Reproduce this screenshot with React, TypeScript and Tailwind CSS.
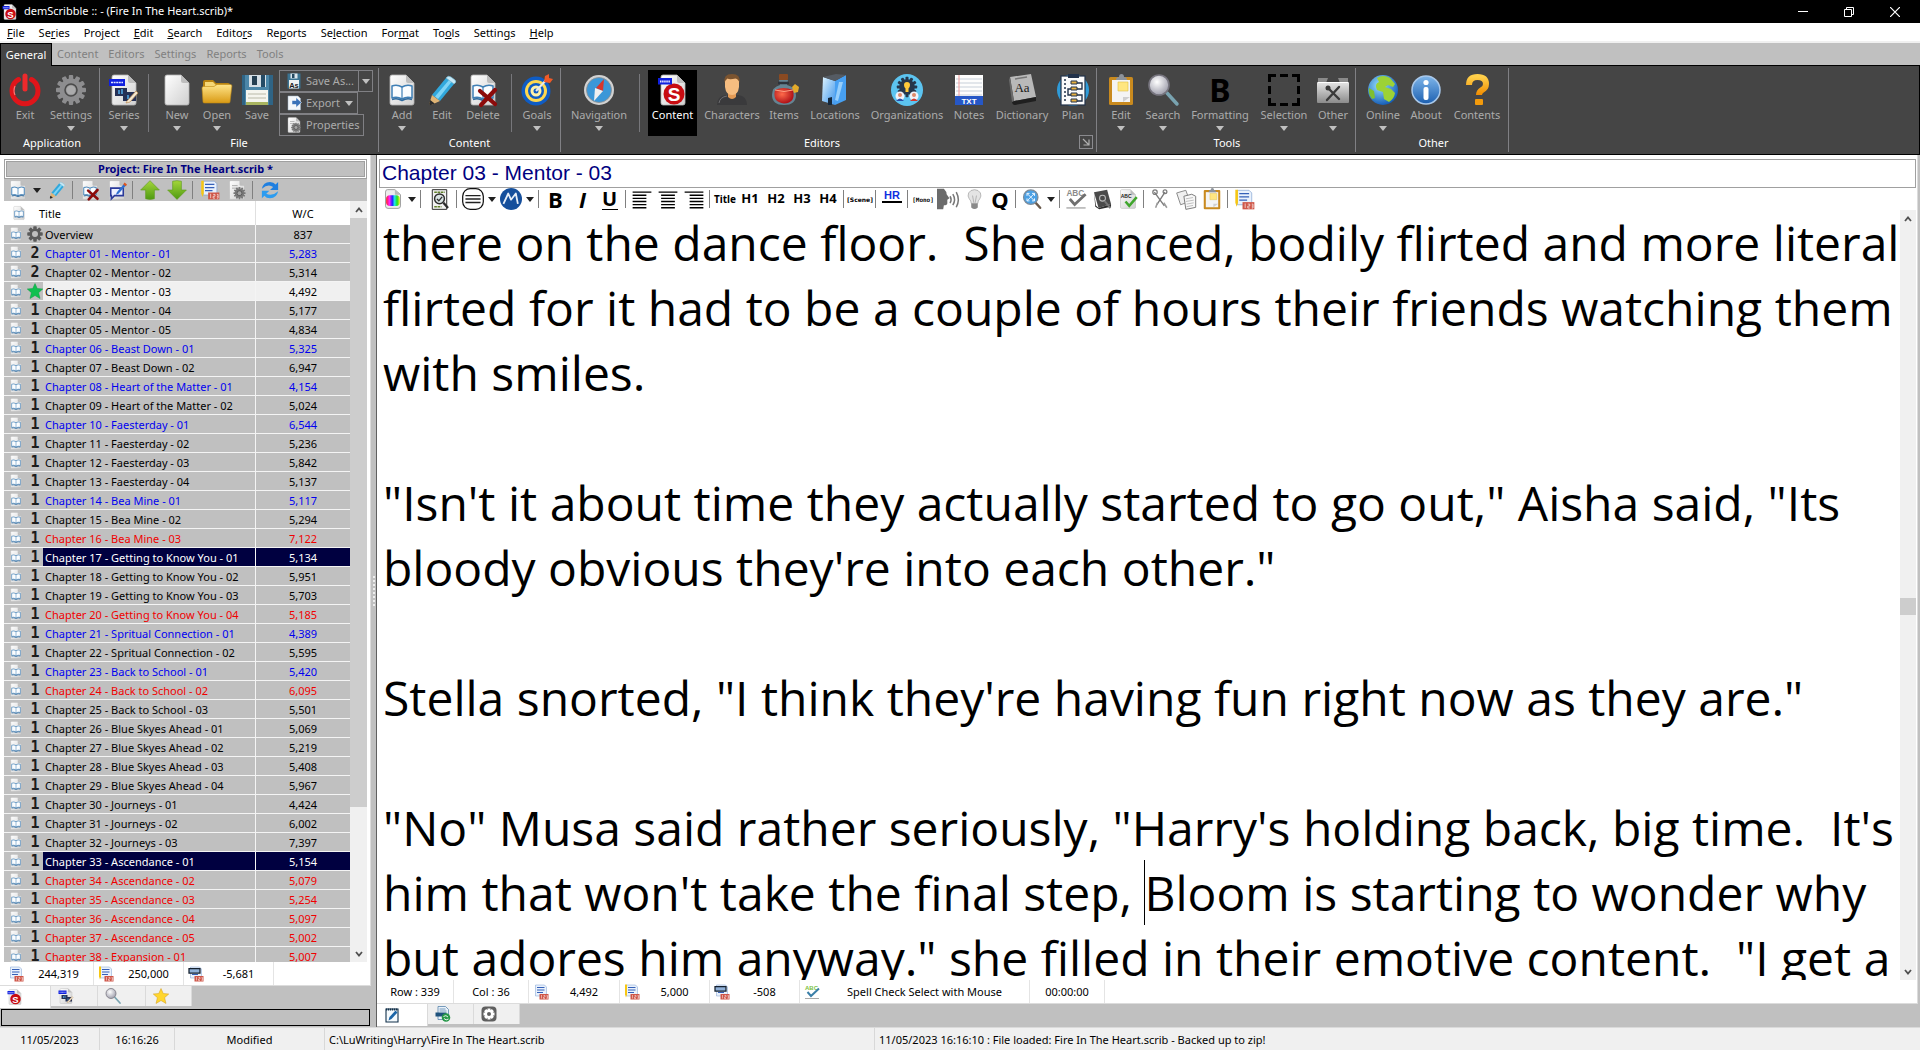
import { useState, type ReactNode } from "react";
import clsx from "clsx";

type IconProps = { className?: string };

/* ---------- shared drawing parts ---------- */

function Defs() {
  return (
    <svg className="absolute size-0" aria-hidden="true">
      <defs>
        <linearGradient id="paper" x1="0" y1="0" x2="1" y2="1">
          <stop offset="0" stopColor="#ffffff" />
          <stop offset="1" stopColor="#cfcfcf" />
        </linearGradient>
        <linearGradient id="folder" x1="0" y1="0" x2="0" y2="1">
          <stop offset="0" stopColor="#ffe58a" />
          <stop offset="1" stopColor="#d99a14" />
        </linearGradient>
        <linearGradient id="steel" x1="0" y1="0" x2="0" y2="1">
          <stop offset="0" stopColor="#e6e6e6" />
          <stop offset="1" stopColor="#8b8b8b" />
        </linearGradient>
        <linearGradient id="green" x1="0" y1="0" x2="0" y2="1">
          <stop offset="0" stopColor="#a4d63a" />
          <stop offset="1" stopColor="#4e9a12" />
        </linearGradient>
        <linearGradient id="blue" x1="0" y1="0" x2="0" y2="1">
          <stop offset="0" stopColor="#7fb6ea" />
          <stop offset="1" stopColor="#1c5fb0" />
        </linearGradient>
        <linearGradient id="amber" x1="0" y1="0" x2="0" y2="1">
          <stop offset="0" stopColor="#ffcf4a" />
          <stop offset="1" stopColor="#f08c00" />
        </linearGradient>
        <linearGradient id="glass" x1="0" y1="0" x2="1" y2="1">
          <stop offset="0" stopColor="#dff5ff" />
          <stop offset="1" stopColor="#3e94ea" />
        </linearGradient>
        <linearGradient id="spectrum" x1="0" y1="0" x2="1" y2="0">
          <stop offset="0" stopColor="#ff2020" />
          <stop offset="0.25" stopColor="#ff20ff" />
          <stop offset="0.45" stopColor="#2020ff" />
          <stop offset="0.62" stopColor="#20e8e8" />
          <stop offset="0.8" stopColor="#20e020" />
          <stop offset="1" stopColor="#f8f020" />
        </linearGradient>
        <radialGradient id="lens" cx="0.4" cy="0.35" r="0.7">
          <stop offset="0" stopColor="#ffffff" />
          <stop offset="1" stopColor="#9a9aa8" />
        </radialGradient>
        <radialGradient id="potion" cx="0.4" cy="0.4" r="0.6">
          <stop offset="0" stopColor="#ff6a4a" />
          <stop offset="1" stopColor="#b01218" />
        </radialGradient>
        <radialGradient id="globe" cx="0.4" cy="0.35" r="0.7">
          <stop offset="0" stopColor="#9be4ff" />
          <stop offset="1" stopColor="#0e56b4" />
        </radialGradient>
      </defs>
    </svg>
  );
}

function Svg({ className = "size-8", children }: IconProps & { children: ReactNode }) {
  return (
    <svg viewBox="0 0 32 32" className={clsx("shrink-0 overflow-visible", className)} aria-hidden="true">
      {children}
    </svg>
  );
}

const Paper = () => (
  <>
    <path d="M6 1h14l8 8v20q0 2-2 2H6q-2 0-2-2V3q0-2 2-2z" fill="url(#paper)" stroke="#b5b5b5" strokeWidth="0.8" />
    <path d="M20 1v6q0 2 2 2h6z" fill="#bdbdbd" />
  </>
);

const Book = () => (
  <>
    <path d="M6 12q5-2 10 1q5-3 10-1v12q-5-2-10 1q-5-3-10-1z" fill="#fbfdff" stroke="#3f7fb5" strokeWidth="1.500" strokeLinejoin="round" />
    <path d="M16 13v12" stroke="#3f7fb5" strokeWidth="1.200" />
    <path d="M6 25.500q5-2 10 1q5-3 10-1" fill="none" stroke="#2f6a9e" strokeWidth="1.500" />
  </>
);

const Cog = ({ fill, cx = 16, cy = 16, s = 1 }: { fill: string; cx?: number; cy?: number; s?: number }) => (
  <g transform={`translate(${cx} ${cy}) scale(${s})`}>
    {[0, 30, 60, 90, 120, 150].map((a) => (
      <rect key={a} x="-2.2" y="-15" width="4.4" height="30" rx="1" fill={fill} transform={`rotate(${a})`} />
    ))}
    <circle r="11.5" fill={fill} />
    <circle r="6" fill="none" stroke="#4a4a4a" strokeWidth="1.5" />
    <circle r="4.6" fill="#b8b8b8" opacity="0.7" />
  </g>
);

const Cross = () => <path d="M13 17l15 13M28 16L14 31" stroke="#8c0b0b" strokeWidth="4.2" strokeLinecap="round" />;

/* ---------- icons ---------- */

const PowerIcon = (p: IconProps) => (
  <Svg {...p}>
    <path d="M9.5 5.500A13 13 0 1 0 22.500 5.500" fill="none" stroke="#e0151a" strokeWidth="5" strokeLinecap="round" />
    <path d="M16 2v13" stroke="#ee2a2c" strokeWidth="5" strokeLinecap="round" />
    <path d="M6 12a11 11 0 0 0 0 9" fill="none" stroke="#ff7b78" strokeWidth="1.2" />
  </Svg>
);

const GearIcon = (p: IconProps) => (
  <Svg {...p}>
    <Cog fill="#8d8d8f" />
  </Svg>
);

const SmallGearIcon = (p: IconProps) => (
  <Svg {...p}>
    {[0, 45, 90, 135].map((a) => (
      <rect key={a} x="12.500" y="0.5" width="7" height="31" rx="1.500" fill="#5b5b5b" transform={`rotate(${a} 16 16)`} />
    ))}
    <circle cx="16" cy="16" r="8.500" fill="#c0c0c0" stroke="#5b5b5b" strokeWidth="5" />
  </Svg>
);

const SeriesIcon = (p: IconProps) => (
  <Svg {...p}>
    <Paper />
    <rect x="1" y="5" width="16" height="7" fill="#1020e0" />
    <path d="M3 8.500h12" stroke="#dfe4ff" strokeWidth="1.500" strokeDasharray="2 .6" />
    <path d="M7 14h12v8H7zM17 18h11v9H15v-5z" fill="#253055" />
    <path d="M11 16v4M14 15v5M20 21v4" stroke="#4fa3e0" strokeWidth="1.600" />
    <path d="M19 27l9-10 2 2-8 9-4 1z" fill="#f5e8d0" stroke="#b98a50" strokeWidth="0.7" />
  </Svg>
);

const NewIcon = (p: IconProps) => (
  <Svg {...p}>
    <Paper />
  </Svg>
);

const FolderIcon = (p: IconProps) => (
  <Svg {...p}>
    <path d="M2 8q0-2 2-2h8l3 3h12q2 0 2 2v16H2z" fill="#b98310" />
    <path d="M4 8h8l3 3h12v5H4z" fill="#f6d776" />
    <path d="M1 14q0-1.500 1.500-1.500H13l3-2h13.500q1.500 0 1.400 1.500L29 28q0 1-1.500 1h-24Q2 29 2 28z" fill="url(#folder)" stroke="#c08a14" strokeWidth="0.6" />
  </Svg>
);

const DiskIcon = (p: IconProps) => (
  <Svg {...p}>
    <path d="M1 1h29l2 2v28H1z" fill="#4b86a8" />
    <path d="M1 1h3v30H1zM28 1h4v30h-4z" fill="#2f6485" />
    <rect x="8" y="1" width="17" height="12" fill="#d5dfe6" />
    <rect x="11" y="2" width="5" height="9" fill="#243f52" />
    <rect x="20" y="1" width="4" height="12" fill="#254b66" />
    <rect x="5" y="16" width="22" height="15" fill="#f5f5ee" />
    <path d="M7 20h18M7 24h18" stroke="#b9b9a8" />
    <rect x="5" y="28" width="22" height="3" fill="#a9b560" />
  </Svg>
);

const SaveAsIcon = (p: IconProps) => (
  <Svg {...p}>
    <path d="M3 1h26v30H3z" fill="#3b7391" />
    <rect x="9" y="1" width="14" height="10" fill="#dbe5ec" />
    <rect x="12" y="2" width="5" height="8" fill="#23485f" />
    <rect x="6" y="14" width="20" height="17" fill="#eef2f2" />
    <text x="16" y="29" textAnchor="middle" fontSize="15" fontWeight="700" fontFamily="Liberation Sans" fill="#1a1a1a">As</text>
  </Svg>
);

const ExportIcon = (p: IconProps) => (
  <Svg {...p}>
    <path d="M4 2h20l5 5v23H4z" fill="#f4f7fa" stroke="#9fb3c6" />
    <path d="M12 11h8V5l11 10-11 10v-6h-8z" fill="#3a72b8" stroke="#fff" />
  </Svg>
);

const DocGearIcon = (p: IconProps) => (
  <Svg {...p}>
    <Paper />
    <path d="M8 9h9M8 13h12" stroke="#a9a9a9" strokeWidth="1.500" />
    <Cog fill="#777" cx={20} cy={21} s={0.65} />
  </Svg>
);

const BookIcon = (p: IconProps) => (
  <Svg {...p}>
    <Paper />
    <Book />
  </Svg>
);

const PencilIcon = (p: IconProps) => (
  <Svg {...p}>
    <path d="M6 21L20 4l8 6-14 17z" fill="#31a8dc" />
    <path d="M9 22.500L23 6l2.500 2L12 25z" fill="#7fd4f5" />
    <path d="M20 4q2-3 5-1l4 3q2 2-1 4z" fill="#c8e9f6" stroke="#6fb9d6" strokeWidth="0.6" />
    <path d="M6 21l8 6-9 4q-2 0-1.500-2z" fill="#e0b475" />
    <path d="M4.200 26l-1 4q.5 1.500 2 1l3.500-1.600z" fill="#2b2b2b" />
  </Svg>
);

const DeleteDocIcon = (p: IconProps) => (
  <Svg {...p}>
    <Paper />
    <Book />
    <Cross />
  </Svg>
);

const RenameDocIcon = (p: IconProps) => (
  <Svg {...p}>
    <Paper />
    <path d="M6 13h20v12H12l-5 5v-5H6z" fill="#eef1ff" stroke="#2a3a9a" strokeWidth="2.500" />
    <path d="M14 24l2-5L28 5l3 3-12 13z" fill="#2f6fd0" />
    <path d="M26 7l2-3 4 3-2 3z" fill="#e0561c" />
  </Svg>
);

const TargetIcon = (p: IconProps) => (
  <Svg {...p}>
    <circle cx="15" cy="17" r="14.500" fill="#0f5cc4" />
    <circle cx="15" cy="17" r="11" fill="#ffd84e" />
    <circle cx="15" cy="17" r="8" fill="#0f5cc4" />
    <circle cx="15" cy="17" r="5.500" fill="#fff1a8" />
    <circle cx="15" cy="17" r="2.500" fill="#0f5cc4" />
    <path d="M15 17L27 4" stroke="#e9e9e9" strokeWidth="2" />
    <path d="M23 8l1-6 4-2v4l4 1-3 4z" fill="#ef5a28" />
  </Svg>
);

const CompassIcon = (p: IconProps) => (
  <Svg {...p}>
    <circle cx="16" cy="16" r="15" fill="#d2d2d2" />
    <circle cx="16" cy="16" r="12.500" fill="#3b97d8" stroke="#8e8e8e" strokeWidth="0.800" />
    <path d="M21 5l-1 12-7-3z" fill="#d8362c" />
    <path d="M11 27l1-13 8 3z" fill="#f0f0f0" />
  </Svg>
);

const ScribIcon = (p: IconProps) => (
  <Svg {...p}>
    <Paper />
    <circle cx="17" cy="20" r="10.500" fill="#c80c12" />
    <text x="17" y="27" textAnchor="middle" fontSize="19" fontWeight="700" fontFamily="Liberation Sans" fill="#fff">S</text>
    <rect x="1" y="4" width="14" height="6.500" fill="#1020e0" />
    <path d="M3 7.500h10" stroke="#e6e8ff" strokeWidth="2" strokeDasharray="1.500 .6" />
  </Svg>
);

const PersonIcon = (p: IconProps) => (
  <Svg {...p}>
    <path d="M1 31q0-9 9-10h12q9 1 9 10z" fill="#3a3a3c" />
    <path d="M3 29q1-6 8-7" stroke="#6d6d70" fill="none" />
    <path d="M12 17h8v6q-4 4-8 0z" fill="#e39a55" />
    <path d="M9 7q0-6 7-6t7 6v6q-1 8-7 8t-7-8z" fill="#f6bd80" />
    <path d="M8.500 9Q7 0 16 0t7.500 9q-1-4-4-4.500-6 1.500-8 0Q9 6 8.500 9z" fill="#7b5430" />
  </Svg>
);

const PotionIcon = (p: IconProps) => (
  <Svg {...p}>
    <rect x="11" y="0" width="9" height="6" rx="1" fill="#8a4a22" />
    <path d="M11 6h9l-1 5q9 2 9 10 0 10-12 10T4 21q0-8 8-10z" fill="#6f9aae" opacity="0.75" />
    <path d="M7 16q8-4 18 0 3 13-9 13.500Q4 28 7 16z" fill="url(#potion)" />
    <path d="M7 16q9 3 18 0" stroke="#ffa083" fill="none" />
    <path d="M10 9h11" stroke="#2c333c" strokeWidth="2.500" />
    <path d="M24 13l3-3 4 3-1 5-4 1z" fill="#e3aa2a" />
  </Svg>
);

const BuildingIcon = (p: IconProps) => (
  <Svg {...p}>
    <path d="M4 3l12 4v24L3 27z" fill="url(#glass)" />
    <path d="M16 7L27 1v25l-11 5z" fill="#47a0f2" />
    <path d="M4 3L17 0l10 1-11 6z" fill="#555b63" />
    <path d="M20 8l-4 18 3 1 5-19z" fill="#b9e3ff" opacity="0.700" />
    <path d="M9 31v-7l4-1v8z" fill="#15283c" />
  </Svg>
);

const OrgIcon = (p: IconProps) => (
  <Svg {...p}>
    <circle cx="16" cy="16" r="16" fill="#5cc4f0" />
    <Cog fill="#26374c" cx={16} cy={13} s={0.68} />
    <circle cx="16" cy="13" r="6" fill="#26374c" />
    <path d="M13 11a3 3 0 0 1 6 0q0 2-1.500 3.500V18h-3v-3.500Q13 13 13 11z" fill="#ffc93a" />
    <circle cx="9" cy="22" r="4.500" fill="#eef2fa" />
    <circle cx="23" cy="22" r="4.500" fill="#eef2fa" />
    <circle cx="9" cy="21" r="2" fill="#e08a6a" />
    <circle cx="23" cy="21" r="2" fill="#e08a6a" />
    <path d="M5 27q4-5 8 0z" fill="#2c4fa8" />
    <path d="M19 27q4-5 8 0z" fill="#d2392f" />
  </Svg>
);

const NotesIcon = (p: IconProps) => (
  <Svg {...p}>
    <rect x="2" y="1" width="28" height="22" fill="#fdfdfd" />
    <path d="M3 5h26M3 9h26M3 13h26M3 17h26M3 21h26" stroke="#b9c3cf" strokeWidth="0.800" />
    <path d="M6 1v22" stroke="#f09a9a" />
    <rect x="2" y="22" width="28" height="9" fill="#2657c6" />
    <text x="16" y="29.500" textAnchor="middle" fontSize="8" fontWeight="700" fontFamily="Liberation Sans" fill="#fff">TXT</text>
  </Svg>
);

const DictionaryIcon = (p: IconProps) => (
  <Svg {...p}>
    <path d="M4 3L25 0l5 23-22 4z" fill="#b9b9b9" />
    <path d="M8 27l22-4v4L9 31q-3 0-3-4z" fill="#1f1f1f" />
    <path d="M4 3l4 24-2 1L3 6z" fill="#6b6b6b" />
    <text x="16" y="18" textAnchor="middle" fontSize="13" fontFamily="Liberation Serif" fill="#1a1a1a">Aa</text>
    <path d="M9 5l12-2" stroke="#777" strokeWidth="1.500" />
  </Svg>
);

const PlanIcon = (p: IconProps) => (
  <Svg {...p}>
    <circle cx="16" cy="16" r="16" fill="#2f9bd8" />
    <rect x="4" y="2" width="24" height="29" fill="#fbfbfb" stroke="#22324a" strokeWidth="1.200" />
    <rect x="11" y="0" width="11" height="4" fill="#22324a" />
    <path d="M8 5v24" stroke="#22324a" strokeWidth="1.500" strokeDasharray="2 2" />
    <path d="M20 9h5v6h-5M14 15h-3v6h3M20 21h5v6h-5" stroke="#22324a" fill="none" strokeWidth="1.400" />
    <path d="M14 7h6v3h-6zM14 13h6v3h-6zM14 19h6v3h-6zM14 25h6v3h-6z" fill="#e7b040" stroke="#22324a" />
  </Svg>
);

const ClipboardIcon = (p: IconProps) => (
  <Svg {...p}>
    <rect x="4" y="3" width="24" height="28" rx="1.500" fill="#c98a1e" />
    <path d="M7 6h18v22H7z" fill="#f4f4f4" />
    <path d="M11 6q0-3 3-3 0-3 2.500-3T19 3q3 0 3 3z" fill="#8d939b" />
    <path d="M13 8h10v9H13z" fill="#ffe680" stroke="#dfbf45" strokeWidth="0.600" />
    <path d="M18 28v-5h7z" fill="#cfcfcf" />
  </Svg>
);

const SearchIcon = (p: IconProps) => (
  <Svg {...p}>
    <path d="M20 19l10 11" stroke="#79a3b0" strokeWidth="3.500" strokeLinecap="round" />
    <circle cx="12" cy="11" r="10" fill="url(#lens)" stroke="#77757f" strokeWidth="1.600" />
  </Svg>
);

const BoldIcon = ({ className }: IconProps) => (
  <Svg className={className}>
    <text x="16" y="28" textAnchor="middle" fontSize="32" fontWeight="700" fontFamily="Noto Sans" fill="#000">B</text>
  </Svg>
);

const SelectionIcon = (p: IconProps) => (
  <Svg {...p}>
    <path d="M1.500 8V1.500H8M12 1.500h8M24 1.500h6.500V8M30.500 12v8M30.500 24v6.500H24M20 30.500h-8M8 30.500H1.500V24M1.500 20v-8" fill="none" stroke="#000" strokeWidth="3" />
  </Svg>
);

const ToolboxIcon = (p: IconProps) => (
  <Svg {...p}>
    <path d="M1 4h30v5H1z" fill="#8a8a8a" />
    <path d="M11 4h10l2 5H9z" fill="#454545" />
    <rect x="0" y="8" width="32" height="21" rx="1" fill="url(#steel)" />
    <path d="M11 14l11 11M22 13L10 26" stroke="#3a3a3a" strokeWidth="2.400" strokeLinecap="round" />
    <circle cx="11" cy="14" r="2.500" fill="#3a3a3a" />
    <path d="M1 8.500h30" stroke="#fff" />
  </Svg>
);

const GlobeIcon = (p: IconProps) => (
  <Svg {...p}>
    <circle cx="16" cy="16" r="15" fill="url(#globe)" />
    <path d="M10 4q6-4 13 0l5 6-2 3-5-2-3 2 6 2 4 4q-1 6-6 9l-5-3-1-7-6-2q-3-6 2-8z" fill="#9cd236" />
    <path d="M2 14l5 3 1 7-3 1q-4-5-3-11z" fill="#7fbf30" />
  </Svg>
);

const InfoIcon = (p: IconProps) => (
  <Svg {...p}>
    <circle cx="16" cy="16" r="14" fill="url(#blue)" stroke="#a9c8ea" strokeWidth="1.500" />
    <circle cx="16" cy="8.500" r="2.600" fill="#fff" />
    <rect x="13.500" y="13" width="5" height="13" rx="2" fill="#fff" />
  </Svg>
);

const QuestionIcon = (p: IconProps) => (
  <Svg {...p}>
    <path d="M8 11q0-8 8.500-8T25 10q0 4-4 6-3 2-3 5" fill="none" stroke="url(#amber)" strokeWidth="6" />
    <rect x="14" y="25" width="8" height="6" rx="1" fill="#f29a0c" />
  </Svg>
);

const UpIcon = (p: IconProps) => (
  <Svg {...p}>
    <path d="M16 1l15 15h-8v14q-7 2-14 0V16H1z" fill="url(#green)" stroke="#5d9a1a" />
  </Svg>
);

const DownIcon = (p: IconProps) => (
  <Svg {...p}>
    <path d="M16 31l15-15h-8V2Q16 0 9 2v14H1z" fill="url(#green)" stroke="#5d9a1a" />
  </Svg>
);

const RefreshIcon = (p: IconProps) => (
  <Svg {...p}>
    <path d="M3 14Q5 3 16 3q6 0 9 4l4-4v13H16l5-5q-8-6-18 3z" fill="#1f7fe0" />
    <path d="M29 18q-2 11-13 11-6 0-9-4l-4 4V17h12l-5 5q9 5 19-4z" fill="#2c9cf0" />
  </Svg>
);

// paper with the red counter box, used for everything about word counts
const CountIcon = ({ className, kind = "plain" }: IconProps & { kind?: "plain" | "goal" | "left" }) => (
  <Svg className={className}>
    <path d="M5 2h18l4 4v18H5z" fill="#e9f1fc" stroke="#7b9fd0" />
    <path d="M8 7h15M8 12h15M8 17h12" stroke="#3560b8" strokeWidth="2" />
    {kind === "goal" && <path d="M2 1h4v20l-2 6-2-6z" fill="#f7c713" />}
    {kind === "left" && <path d="M2 5h22v9H2z" fill="#8fb0d8" stroke="#15202e" strokeWidth="2.500" />}
    <rect x="13" y="20" width="18" height="11" fill="#cf5648" />
    <path d="M17 22v7M21 23h3v3h-3v3h3M27 23h2v6h-2M27 26h2" stroke="#fff" fill="none" />
  </Svg>
);

const ColorIcon = (p: IconProps) => (
  <Svg {...p}>
    <path d="M7 1h12l9 8v18q0 4-4 4H8q-4 0-4-4V5q0-4 3-4z" fill="#ececec" stroke="#9c9c9c" strokeWidth="1.500" />
    <path d="M19 1v8h9z" fill="#b9b9b9" />
    <rect x="5" y="10" width="22" height="17" rx="6" fill="url(#spectrum)" />
  </Svg>
);

const InspectIcon = (p: IconProps) => (
  <Svg {...p}>
    <path d="M5 1h22v30H5z" fill="#f2f2f2" stroke="#2c2c2c" strokeWidth="1.500" />
    <path d="M8 5h16M8 27h11" stroke="#5f7f28" strokeWidth="2.500" strokeDasharray="4 1" />
    <circle cx="16" cy="15" r="7.500" fill="#d9e3e3" stroke="#2c2c2c" strokeWidth="2.200" />
    <path d="M12 15l3 3 5-6" stroke="#2c2c2c" fill="none" strokeWidth="2" />
    <path d="M22 21l7 8" stroke="#2c2c2c" strokeWidth="3.500" />
  </Svg>
);

const LinesIcon = (p: IconProps) => (
  <Svg {...p}>
    <rect x="1" y="1" width="30" height="30" rx="11" fill="none" stroke="#111" strokeWidth="1.800" />
    <path d="M5 11h22M5 16h22M5 21h22" stroke="#222" strokeWidth="2" />
  </Svg>
);

const MarkIcon = (p: IconProps) => (
  <Svg {...p}>
    <circle cx="16" cy="16" r="16" fill="#154f9c" />
    <path d="M5 23L12 8l4 9 7-9 3 15" fill="none" stroke="#e6eef8" strokeWidth="2.600" strokeLinejoin="round" />
  </Svg>
);

const AlignLeftIcon = (p: IconProps) => (
  <Svg {...p}>
    <path d="M1 5h30M1 10h22M1 15h22M1 20h22M1 25h22M1 30h22" stroke="#000" strokeWidth="2.200" />
  </Svg>
);

const AlignCenterIcon = (p: IconProps) => (
  <Svg {...p}>
    <path d="M1 5h30M5 10h22M5 15h22M5 20h22M5 25h22M5 30h22" stroke="#000" strokeWidth="2.200" />
  </Svg>
);

const AlignRightIcon = (p: IconProps) => (
  <Svg {...p}>
    <path d="M1 5h30M9 10h22M9 15h22M9 20h22M9 25h22M9 30h22" stroke="#000" strokeWidth="2.200" />
  </Svg>
);

const SpeakIcon = (p: IconProps) => (
  <Svg {...p}>
    <path d="M0 1h10q4 4 4 8l4 6-3 2v5q0 3-5 3l-1 6H0z" fill="#6b6b6b" />
    <path d="M19 12q3 5 0 10M23 9q5 8 0 16M28 6q6 11 0 22" stroke="#777" fill="none" strokeWidth="2.200" />
  </Svg>
);

const BulbIcon = (p: IconProps) => (
  <Svg {...p}>
    <path d="M11 22q0-4-3-7Q5 11 7 6q3-5 9-5t9 5q2 5-1 9-3 3-3 7z" fill="#e4e4e4" stroke="#9a9a9a" />
    <path d="M13 10l2 11M19 10l-2 11" stroke="#9a9a9a" fill="none" />
    <path d="M11 22h10v6q-5 5-10 0z" fill="#8a8a8a" />
  </Svg>
);

const ZoomFitIcon = (p: IconProps) => (
  <Svg {...p}>
    <path d="M20 20l9 10" stroke="#6a5a4c" strokeWidth="4" strokeLinecap="round" />
    <circle cx="14" cy="13" r="11.500" fill="#4aa0e4" stroke="#7c8a98" strokeWidth="2" />
    <path d="M8 7l12 12M20 7L8 19M8 11V7h4M16 7h4v4M20 15v4h-4M12 19H8v-4" stroke="#e8f4ff" fill="none" strokeWidth="1.600" />
  </Svg>
);

const SpellIcon = ({ className, tone = "#8b8b8b", mark = "#6f6f6f" }: IconProps & { tone?: string; mark?: string }) => (
  <Svg className={className}>
    <text x="15" y="11" textAnchor="middle" fontSize="12" fontWeight="700" fontFamily="Liberation Sans" fill={tone}>ABC</text>
    <path d="M7 16l7 8L30 9" stroke={mark} strokeWidth="4" fill="none" />
    <path d="M2 29h28" stroke="#a9a9a9" strokeWidth="2" />
  </Svg>
);

const ThesaurusIcon = (p: IconProps) => (
  <Svg {...p}>
    <path d="M3 5l20-4 6 22-19 6z" fill="#4a4a4a" />
    <path d="M3 5l3 20 4 4 19-6v4L11 31l-6-4z" fill="#2c2c2c" />
    <circle cx="16" cy="14" r="4.500" fill="none" stroke="#bdbdbd" strokeWidth="1.600" />
    <path d="M19 18l9 11" stroke="#777" strokeWidth="3" />
  </Svg>
);

const ProofIcon = (p: IconProps) => (
  <Svg {...p}>
    <Paper />
    <text x="13" y="14" textAnchor="middle" fontSize="8" fontWeight="700" fontFamily="Liberation Sans" fill="#222">ABC</text>
    <path d="M12 20l6 7L30 13" stroke="#3fa62c" strokeWidth="4" fill="none" />
  </Svg>
);

const CutIcon = (p: IconProps) => (
  <Svg {...p}>
    <path d="M7 5l16 22M24 5L11 25" stroke="#7c7c7c" strokeWidth="2.200" />
    <circle cx="8" cy="5" r="3.500" fill="none" stroke="#7c7c7c" strokeWidth="2" />
    <circle cx="24" cy="4.500" r="3" fill="none" stroke="#7c7c7c" strokeWidth="2" />
    <path d="M22 22l5 8M12 22l-3 8" stroke="#9c9c9c" strokeWidth="2.500" />
  </Svg>
);

const CopyIcon = (p: IconProps) => (
  <Svg {...p}>
    <path d="M1 6l14-4 6 17-14 5z" fill="#f0f0f0" stroke="#8b8b8b" strokeWidth="1.500" />
    <path d="M12 11l12-3 6 3v17l-15 3z" fill="#f8f8f8" stroke="#7d7d7d" strokeWidth="1.500" />
    <path d="M15 15l11-2M15 19l12-2M16 23l11-2M16 27l10-2" stroke="#a2a2a2" />
  </Svg>
);

const StarIcon = ({ className, fill = "url(#amber)", stroke = "#d39a1a" }: IconProps & { fill?: string; stroke?: string }) => (
  <Svg className={className}>
    <path d="M16 1l4.500 10 11 1-8.300 7.300L26 31l-10-6-10 6 2.800-11.700L.5 12l11-1z" fill={fill} stroke={stroke} />
  </Svg>
);

const EditPageIcon = (p: IconProps) => (
  <Svg {...p}>
    <path d="M4 4h24v26H4z" fill="#f5fafd" stroke="#12304a" strokeWidth="2.200" />
    <path d="M4 5h24" stroke="#12304a" strokeWidth="4" strokeDasharray="2.500 1.500" />
    <path d="M9 27l2-7L23 7l4 4-12 13z" fill="#1c66a8" />
  </Svg>
);

const WebPageIcon = (p: IconProps) => (
  <Svg {...p}>
    <path d="M6 1h15l6 6v20H6z" fill="#eaf2fa" stroke="#4f7ea8" strokeWidth="1.500" />
    <path d="M9 6h12M9 10h14" stroke="#4f7ea8" strokeWidth="1.500" />
    <rect x="1" y="13" width="22" height="8" fill="#1e527d" />
    <circle cx="22" cy="23" r="8.500" fill="#28984a" />
    <path d="M17 21q5-4 9 1M27 26q-5 4-9-1" stroke="#fff" fill="none" strokeWidth="1.800" />
  </Svg>
);

const AppSettingsIcon = (p: IconProps) => (
  <Svg {...p}>
    <rect x="1" y="1" width="30" height="30" rx="8" fill="#5f5f5f" />
    {[0, 45, 90, 135].map((a) => (
      <rect key={a} x="13" y="5" width="6" height="22" fill="#fff" transform={`rotate(${a} 16 16)`} />
    ))}
    <circle cx="16" cy="16" r="6" fill="#5f5f5f" stroke="#fff" strokeWidth="4" />
  </Svg>
);

function Caret({ className = "text-black" }: IconProps) {
  return (
    <svg viewBox="0 0 8 5" className={clsx("h-[5px] w-2", className)} aria-hidden="true">
      <path d="M0 0h8L4 5z" fill="currentColor" />
    </svg>
  );
}

function Chevron({ down = false }: { down?: boolean }) {
  return (
    <svg viewBox="0 0 8 6" className="h-[6px] w-2" aria-hidden="true">
      <path d={down ? "M1 1l3 3.500L7 1" : "M1 5l3-3.500L7 5"} fill="none" stroke="#505050" strokeWidth="1.800" />
    </svg>
  );
}

/* ---------- data ---------- */

// label split around its mnemonic letter
const menus = [
  ["", "F", "ile"],
  ["Se", "r", "ies"],
  ["Pro", "j", "ect"],
  ["", "E", "dit"],
  ["", "S", "earch"],
  ["Edito", "r", "s"],
  ["Re", "p", "orts"],
  ["Se", "l", "ection"],
  ["For", "m", "at"],
  ["To", "o", "ls"],
  ["Settin", "g", "s"],
  ["", "H", "elp"],
];

const ribbonTabs = ["Content", "Editors", "Settings", "Reports", "Tools"];

const chapters: [string, string, string?][] = [
  ["Overview", "837"],
  ["Chapter 01 - Mentor - 01", "5,283", "blue"],
  ["Chapter 02 - Mentor - 02", "5,314"],
  ["Chapter 03 - Mentor - 03", "4,492", "current"],
  ["Chapter 04 - Mentor - 04", "5,177"],
  ["Chapter 05 - Mentor - 05", "4,834"],
  ["Chapter 06 - Beast Down - 01", "5,325", "blue"],
  ["Chapter 07 - Beast Down - 02", "6,947"],
  ["Chapter 08 - Heart of the Matter - 01", "4,154", "blue"],
  ["Chapter 09 - Heart of the Matter - 02", "5,024"],
  ["Chapter 10 - Faesterday - 01", "6,544", "blue"],
  ["Chapter 11 - Faesterday - 02", "5,236"],
  ["Chapter 12 - Faesterday - 03", "5,842"],
  ["Chapter 13 - Faesterday - 04", "5,137"],
  ["Chapter 14 - Bea Mine - 01", "5,117", "blue"],
  ["Chapter 15 - Bea Mine - 02", "5,294"],
  ["Chapter 16 - Bea Mine - 03", "7,122", "red"],
  ["Chapter 17 - Getting to Know You - 01", "5,134", "navy"],
  ["Chapter 18 - Getting to Know You - 02", "5,951"],
  ["Chapter 19 - Getting to Know You - 03", "5,703"],
  ["Chapter 20 - Getting to Know You - 04", "5,185", "red"],
  ["Chapter 21 - Spritual Connection - 01", "4,389", "blue"],
  ["Chapter 22 - Spritual Connection - 02", "5,595"],
  ["Chapter 23 - Back to School - 01", "5,420", "blue"],
  ["Chapter 24 - Back to School - 02", "6,095", "red"],
  ["Chapter 25 - Back to School - 03", "5,501"],
  ["Chapter 26 - Blue Skyes Ahead - 01", "5,069"],
  ["Chapter 27 - Blue Skyes Ahead - 02", "5,219"],
  ["Chapter 28 - Blue Skyes Ahead - 03", "5,408"],
  ["Chapter 29 - Blue Skyes Ahead - 04", "5,967"],
  ["Chapter 30 - Journeys - 01", "4,424"],
  ["Chapter 31 - Journeys - 02", "6,002"],
  ["Chapter 32 - Journeys - 03", "7,397"],
  ["Chapter 33 - Ascendance - 01", "5,154", "navy"],
  ["Chapter 34 - Ascendance - 02", "5,079", "red"],
  ["Chapter 35 - Ascendance - 03", "5,254", "red"],
  ["Chapter 36 - Ascendance - 04", "5,097", "red"],
  ["Chapter 37 - Ascendance - 05", "5,002", "red"],
  ["Chapter 38 - Expansion - 01", "5,007", "red"],
];

const rowTone: Record<string, string> = {
  plain: "bg-[#c0c0c0]",
  blue: "bg-[#c0c0c0] text-[#0000f0]",
  red: "bg-[#c0c0c0] text-[#f00000]",
  navy: "bg-[#000040] text-white",
  current: "bg-[#f0f0f0]",
};

const story = [
  "there on the dance floor.  She danced, bodily flirted and more literal flirted for it had to be a couple of hours their friends watching them with smiles.",
  "\"Isn't it about time they actually started to go out,\" Aisha said, \"Its bloody obvious they're into each other.\"",
  "Stella snorted, \"I think they're having fun right now as they are.\"",
  "\"No\" Musa said rather seriously, \"Harry's holding back, big time.  It's him that won't take the final step, Bloom is starting to wonder why but adores him anyway.\" she filled in their emotive content.  \"I get a",
].join("\n\n");

/* ---------- ribbon ---------- */

function RibbonGroup({ title, className, launcher, children }: { title: string; className?: string; launcher?: boolean; children: ReactNode }) {
  return (
    <section className={clsx("relative flex flex-col border-r border-[#808084]", className)}>
      <div className="flex h-[68px] items-start pt-[2px]">{children}</div>
      <h2 className={clsx("text-center text-[11px] leading-[14px] text-white", launcher && "pr-4")}>{title}</h2>
      {launcher && (
        <button type="button" aria-label="Editors options" className="absolute right-[3px] bottom-[3px] grid size-[14px] place-items-center border border-[#8a8a8e]">
          <svg viewBox="0 0 10 10" className="size-[10px]" aria-hidden="true">
            <path d="M2 2l6 6M8 2.500V8H2.500" fill="none" stroke="#b0b0b0" strokeWidth="1.200" />
          </svg>
        </button>
      )}
    </section>
  );
}

function RibbonButton({ label, icon, width, menu, active }: { label: string; icon: ReactNode; width: string; menu?: boolean; active?: boolean }) {
  return (
    <button
      type="button"
      className={clsx("flex h-[66px] shrink-0 flex-col items-center pt-1 text-[11px] leading-4 whitespace-nowrap", width, active ? "bg-black text-white" : "text-[#ababab]")}
    >
      {icon}
      <span className="pt-px">{label}</span>
      {menu && <Caret className="mt-[3px] text-[#c0c0c0]" />}
    </button>
  );
}

const RibbonSep = () => <span className="mt-1 h-[58px] w-px shrink-0 bg-[#77777b]" />;

function Ribbon() {
  return (
    <div className="flex h-[90px] border border-black bg-[#454545] py-[2px]">
      <RibbonGroup title="Application" className="w-[99px] pl-1">
        <RibbonButton label="Exit" icon={<PowerIcon />} width="w-10" />
        <RibbonButton label="Settings" icon={<GearIcon />} width="w-[52px]" menu />
      </RibbonGroup>
      <RibbonGroup title="File" className="w-[279px]">
        <RibbonButton label="Series" icon={<SeriesIcon />} width="w-12" menu />
        <RibbonSep />
        <div className="w-2" />
        <RibbonButton label="New" icon={<NewIcon />} width="w-10" menu />
        <RibbonButton label="Open" icon={<FolderIcon />} width="w-10" menu />
        <RibbonButton label="Save" icon={<DiskIcon />} width="w-10" />
        <div className="ml-[2px] flex flex-col items-start text-[11px] leading-4 text-[#ababab]">
          <div className="flex h-[22px] border border-[#808084]">
            <button type="button" className="flex w-[78px] items-center gap-1 pl-[6px] whitespace-nowrap">
              <SaveAsIcon className="size-4" /> Save As...
            </button>
            <button type="button" aria-label="Save As options" className="grid w-[14px] place-items-center border-l border-[#808084]">
              <Caret className="text-[#c0c0c0]" />
            </button>
          </div>
          <button type="button" className="flex h-[22px] w-[79px] items-center gap-1 border border-[#808084] pl-[6px]">
            <ExportIcon className="size-4" /> Export
            <Caret className="ml-px text-[#c0c0c0]" />
          </button>
          <button type="button" className="flex h-[22px] w-[85px] items-center gap-1 border border-[#808084] pl-[6px]">
            <DocGearIcon className="size-4" /> Properties
          </button>
        </div>
      </RibbonGroup>
      <RibbonGroup title="Content" className="w-[182px]">
        <RibbonButton label="Add" icon={<BookIcon />} width="w-[46px]" menu />
        <RibbonButton label="Edit" icon={<PencilIcon />} width="w-[34px]" />
        <RibbonButton label="Delete" icon={<DeleteDocIcon />} width="w-12" />
        <div className="w-1" />
        <RibbonSep />
        <div className="w-1" />
        <RibbonButton label="Goals" icon={<TargetIcon />} width="w-[42px]" menu />
      </RibbonGroup>
      <RibbonGroup title="Editors" className="w-[536px] pl-[3px]" launcher>
        <RibbonButton label="Navigation" icon={<CompassIcon />} width="w-[70px]" menu />
        <div className="w-[5px]" />
        <RibbonSep />
        <div className="w-2" />
        <RibbonButton label="Content" icon={<ScribIcon />} width="w-[49px]" active />
        <RibbonButton label="Characters" icon={<PersonIcon />} width="w-[70px]" />
        <RibbonButton label="Items" icon={<PotionIcon />} width="w-[34px]" />
        <RibbonButton label="Locations" icon={<BuildingIcon />} width="w-[68px]" />
        <RibbonButton label="Organizations" icon={<OrgIcon />} width="w-[76px]" />
        <RibbonButton label="Notes" icon={<NotesIcon />} width="w-12" />
        <RibbonButton label="Dictionary" icon={<DictionaryIcon />} width="w-[58px]" />
        <RibbonButton label="Plan" icon={<PlanIcon />} width="w-11" />
      </RibbonGroup>
      <RibbonGroup title="Tools" className="w-[259px] pl-[2px]">
        <RibbonButton label="Edit" icon={<ClipboardIcon />} width="w-11" menu />
        <RibbonButton label="Search" icon={<SearchIcon />} width="w-10" menu />
        <RibbonButton label="Formatting" icon={<BoldIcon />} width="w-[74px]" menu />
        <RibbonButton label="Selection" icon={<SelectionIcon />} width="w-[54px]" menu />
        <RibbonButton label="Other" icon={<ToolboxIcon />} width="w-11" menu />
      </RibbonGroup>
      <RibbonGroup title="Other" className="w-[153px] pl-[3px]">
        <RibbonButton label="Online" icon={<GlobeIcon />} width="w-12" menu />
        <RibbonButton label="About" icon={<InfoIcon />} width="w-[38px]" />
        <RibbonButton label="Contents" icon={<QuestionIcon />} width="w-16" />
      </RibbonGroup>
    </div>
  );
}

/* ---------- small toolbars ---------- */

function ToolButton({ label, width = "w-[26px]", children }: { label: string; width?: string; children: ReactNode }) {
  return (
    <button type="button" aria-label={label} title={label} className={clsx("grid h-[22px] shrink-0 place-items-center whitespace-nowrap", width)}>
      {children}
    </button>
  );
}

const ToolMenu = ({ label }: { label: string }) => (
  <ToolButton label={label} width="w-3">
    <Caret className="text-[#202020]" />
  </ToolButton>
);

const ToolSep = () => <span className="mr-[3px] ml-[2px] h-[18px] w-px shrink-0 self-center bg-[#808080]" />;

function Scrollbar({ thumb, className }: { thumb: ReactNode; className?: string }) {
  return (
    <div className={clsx("flex flex-col bg-[#f0f0f0]", className)}>
      <button type="button" aria-label="Scroll up" className="grid h-[17px] place-items-center">
        <Chevron />
      </button>
      <div className="flex min-h-0 flex-1 flex-col">{thumb}</div>
      <button type="button" aria-label="Scroll down" className="grid h-[17px] place-items-center">
        <Chevron down />
      </button>
    </div>
  );
}

function ChapterMark({ index }: { index: number }) {
  if (index === 0) return <SmallGearIcon className="size-4" />;
  if (index === 3) return <StarIcon className="size-4" fill="#10c050" stroke="#0c9a40" />;
  return <span className="w-4 text-center font-['DejaVu_Sans_Mono'] text-[15px] leading-[18px] font-bold text-[#1c1c1c]">{index < 3 ? 2 : 1}</span>;
}

function Sidebar() {
  return (
    <aside className="flex w-[371px] shrink-0 flex-col bg-[#c0c0c0]">
      <div className="flex min-h-0 flex-1 flex-col border-r border-b border-[#dcdcdc] bg-white pr-[3px] pl-1">
        <div className="mt-1 border border-[#a0a0a0] bg-white p-px">
          <h1 className="border border-[#a0a0a0] bg-[#c0c0c0] text-center text-[11px] leading-[14px] font-bold text-[#000080]">Project: Fire In The Heart.scrib *</h1>
        </div>
        <div className="flex h-[22px] bg-[#c0c0c0]">
          <ToolButton label="Add" width="w-[27px]"><BookIcon className="size-5" /></ToolButton>
          <ToolMenu label="Add options" />
          <ToolButton label="Edit" width="w-[27px]"><PencilIcon className="size-[18px]" /></ToolButton>
          <ToolSep />
          <ToolButton label="Delete" width="w-[27px]"><DeleteDocIcon className="size-5" /></ToolButton>
          <ToolButton label="Rename" width="w-[27px]"><RenameDocIcon className="size-5" /></ToolButton>
          <ToolSep />
          <ToolButton label="Move up" width="w-[27px]"><UpIcon className="size-5" /></ToolButton>
          <ToolButton label="Move down" width="w-[27px]"><DownIcon className="size-5" /></ToolButton>
          <ToolSep />
          <ToolButton label="Goal" width="w-[27px]"><CountIcon className="size-5" kind="goal" /></ToolButton>
          <ToolButton label="Properties" width="w-[27px]"><DocGearIcon className="size-5" /></ToolButton>
          <ToolSep />
          <ToolButton label="Refresh" width="w-[27px]"><RefreshIcon className="size-5" /></ToolButton>
        </div>
        <div className="flex min-h-0 flex-1">
          <div className="min-w-0 flex-1 overflow-hidden">
            <table className="w-full table-fixed border-separate border-spacing-0 text-[11px] leading-[17px]">
              <colgroup>
                <col className="w-[39px]" />
                <col className="w-[213px]" />
                <col />
              </colgroup>
              <thead>
                <tr>
                  <th className="h-6 p-0 pl-2"><BookIcon className="size-[14px]" /></th>
                  <th className="h-6 border-r border-[#e0e0e0] p-0 text-left font-normal"><span className="-ml-1">Title</span></th>
                  <th className="h-6 p-0 font-normal">W/C</th>
                </tr>
              </thead>
              <tbody>
                {chapters.map(([title, count, tone = "plain"], index) => (
                  <tr key={title}>
                    <td className="h-[19px] border-b border-[#f4f4f4] bg-[#c0c0c0] p-0">
                      <span className="flex h-[18px] items-center justify-between pl-[5px]">
                        <BookIcon className="size-[14px]" />
                        <ChapterMark index={index} />
                      </span>
                    </td>
                    <td className={clsx("h-[19px] border-r border-b border-[#f4f4f4] p-0 pt-px pl-[2px] whitespace-nowrap", rowTone[tone])}>{title}</td>
                    <td className={clsx("h-[19px] border-b border-[#f4f4f4] p-0 pt-px text-center", rowTone[tone])}>{count}</td>
                  </tr>
                ))}
              </tbody>
            </table>
          </div>
          <Scrollbar className="w-[17px]" thumb={<div className="h-[81%] bg-[#cdcdcd]" />} />
        </div>
        <div className="flex h-[23px] items-center text-[11px] leading-[22px]">
          <StatusCell icon={<CountIcon className="size-4" />} width="w-[90px]">244,319</StatusCell>
          <StatusCell icon={<CountIcon className="size-4" kind="goal" />} width="w-[90px]">250,000</StatusCell>
          <StatusCell icon={<CountIcon className="size-4" kind="left" />} width="w-[90px]">-5,681</StatusCell>
        </div>
      </div>
      <div role="tablist" className="flex h-[22px] items-start">
        <PaneTab label="Content" width="w-[51px]" active><ScribIcon className="size-4" /></PaneTab>
        <PaneTab label="Series" width="w-[47px]"><SeriesIcon className="size-4" /></PaneTab>
        <PaneTab label="Search" width="w-12"><SearchIcon className="size-4" /></PaneTab>
        <PaneTab label="Favourites" width="w-[46px]"><StarIcon className="size-4" fill="#ffd62e" /></PaneTab>
      </div>
      <div className="m-px h-[17px] border border-black" />
    </aside>
  );
}

function StatusCell({ icon, width, children }: { icon?: ReactNode; width: string; children: ReactNode }) {
  return (
    <div className={clsx("flex h-full items-center border-r border-[#e4e4e4]", icon && "pl-1", width)}>
      {icon}
      <span className="flex-1 text-center">{children}</span>
    </div>
  );
}

function PaneTab({ label, width, active, children }: { label: string; width: string; active?: boolean; children: ReactNode }) {
  return (
    <button
      type="button"
      role="tab"
      aria-label={label}
      aria-selected={!!active}
      className={clsx("flex items-center border-r border-[#dadada] pl-[7px]", active ? "h-[22px] bg-white" : "h-5 bg-[#f0f0f0]", width)}
    >
      {children}
    </button>
  );
}

function FormatBar() {
  return (
    <div className="flex h-[22px] shrink-0 pl-px">
      <ToolButton label="Colour"><ColorIcon className="size-5" /></ToolButton>
      <ToolMenu label="Colour options" />
      <ToolSep />
      <ToolButton label="Inspect" width="w-[30px]"><InspectIcon className="size-[21px]" /></ToolButton>
      <ToolSep />
      <ToolButton label="Paragraph"><LinesIcon className="size-[22px]" /></ToolButton>
      <ToolMenu label="Paragraph options" />
      <ToolButton label="Mark"><MarkIcon className="size-[22px]" /></ToolButton>
      <ToolMenu label="Mark options" />
      <ToolSep />
      <ToolButton label="Bold" width="w-[27px]"><span className="font-['Open_Sans'] text-[22px] leading-[22px] font-bold">B</span></ToolButton>
      <ToolButton label="Italic" width="w-[27px]"><span className="font-['Open_Sans'] text-[22px] leading-[22px] font-bold italic">I</span></ToolButton>
      <ToolButton label="Underline" width="w-[27px]"><span className="w-4 border-b border-black font-['Open_Sans'] text-[20px] leading-5 font-bold">U</span></ToolButton>
      <ToolSep />
      <ToolButton label="Align left"><AlignLeftIcon className="size-5" /></ToolButton>
      <ToolButton label="Align centre"><AlignCenterIcon className="size-5" /></ToolButton>
      <ToolButton label="Align right"><AlignRightIcon className="size-5" /></ToolButton>
      <ToolSep />
      <ToolButton label="Title" width="w-6"><span className="text-[10px] font-bold">Title</span></ToolButton>
      {["H1", "H2", "H3", "H4"].map((h) => (
        <ToolButton key={h} label={h}><span className="text-[13px] font-bold">{h}</span></ToolButton>
      ))}
      <ToolSep />
      <ToolButton label="Scene"><span className="font-['DejaVu_Sans'] text-[6px] font-bold">[Scene]</span></ToolButton>
      <ToolSep />
      <ToolButton label="Horizontal rule">
        <span className="mb-[6px] border-b-2 border-black px-[2px] font-['Liberation_Sans'] text-[11px] leading-3 font-bold text-[#1030e0]">HR</span>
      </ToolButton>
      <ToolSep />
      <ToolButton label="Mono" width="w-6"><span className="font-['DejaVu_Sans_Mono'] text-[6px] font-bold">[Mono]</span></ToolButton>
      <ToolButton label="Speak"><SpeakIcon className="size-[22px]" /></ToolButton>
      <ToolButton label="Thought"><BulbIcon className="size-[21px]" /></ToolButton>
      <ToolButton label="Quote"><span className="text-[22px] leading-[22px] font-bold">Q</span></ToolButton>
      <ToolSep />
      <ToolButton label="Zoom"><ZoomFitIcon className="size-5" /></ToolButton>
      <ToolMenu label="Zoom options" />
      <ToolSep />
      <ToolButton label="Spelling"><SpellIcon className="size-[22px]" /></ToolButton>
      <ToolButton label="Thesaurus"><ThesaurusIcon className="size-[21px]" /></ToolButton>
      <ToolButton label="Proof"><ProofIcon className="size-5" /></ToolButton>
      <ToolSep />
      <ToolButton label="Cut"><CutIcon className="size-5" /></ToolButton>
      <ToolButton label="Copy"><CopyIcon className="size-[21px]" /></ToolButton>
      <ToolButton label="Paste"><ClipboardIcon className="size-[22px]" /></ToolButton>
      <ToolSep />
      <ToolButton label="Goal"><CountIcon className="size-[21px]" kind="goal" /></ToolButton>
    </div>
  );
}

function Editor() {
  const [title, setTitle] = useState("Chapter 03 - Mentor - 03");
  const [text, setText] = useState(story);

  return (
    <main className="flex min-w-0 flex-1 flex-col bg-[#c0c0c0]">
      <div className="mr-[2px] flex min-h-0 flex-1 flex-col border-r border-b border-[#dcdcdc] bg-white pr-px pl-[2px]">
        <input
          aria-label="Title"
          value={title}
          onChange={(e) => setTitle(e.target.value)}
          className="mt-1 h-[29px] w-full shrink-0 border border-[#a0a0a0] bg-white px-[2px] pb-[2px] font-['Liberation_Sans'] text-[21px] text-[#000080] outline-none"
        />
        <FormatBar />
        <div className="relative flex min-h-0 flex-1">
          <textarea
            aria-label="Content"
            value={text}
            spellCheck={false}
            onChange={(e) => setText(e.target.value)}
            className="min-w-0 flex-1 resize-none overflow-hidden bg-white pl-1 font-['Open_Sans','Noto_Sans',sans-serif] text-[48px] leading-[65px] text-black outline-none"
          />
          <span className="absolute top-[650px] left-[765px] h-[65px] w-px bg-black" />
          <Scrollbar
            className="w-4"
            thumb={
              <>
                <div className="flex-[50]" />
                <div className="h-[17px] bg-[#cdcdcd]" />
                <div className="flex-[47]" />
              </>
            }
          />
        </div>
        <div className="-ml-[2px] flex h-[23px] shrink-0 items-center text-[11px] leading-[22px]">
          <StatusCell width="w-[77px]">Row : 339</StatusCell>
          <StatusCell width="w-[75px]">Col : 36</StatusCell>
          <StatusCell icon={<CountIcon className="size-4" />} width="w-[91px]">4,492</StatusCell>
          <StatusCell icon={<CountIcon className="size-4" kind="goal" />} width="w-[90px]">5,000</StatusCell>
          <StatusCell icon={<CountIcon className="size-4" kind="left" />} width="w-[90px]">-508</StatusCell>
          <StatusCell icon={<SpellIcon className="size-4" tone="#7cc242" mark="#3b7fa8" />} width="w-[230px]">Spell Check Select with Mouse</StatusCell>
          <StatusCell width="w-[75px]">00:00:00</StatusCell>
        </div>
      </div>
      <div role="tablist" className="flex h-[23px] items-start">
        <PaneTab label="Edit" width="w-[51px]" active><EditPageIcon className="size-4" /></PaneTab>
        <PaneTab label="Preview" width="w-[46px]"><WebPageIcon className="size-4" /></PaneTab>
        <PaneTab label="Settings" width="w-[46px]"><AppSettingsIcon className="size-4" /></PaneTab>
      </div>
    </main>
  );
}

export default function App() {
  return (
    <div className="flex h-screen flex-col overflow-hidden bg-[#f0f0f0] font-['Noto_Sans','Open_Sans',sans-serif] text-[11px] text-black">
      <Defs />
      <header className="shrink-0">
        <div className="flex h-[23px] items-center bg-black pr-[2px] pl-[2px] text-white">
          <ScribIcon className="size-4" />
          <span className="flex-1 pl-[6px]">demScribble :: - (Fire In The Heart.scrib)*</span>
          <button type="button" aria-label="Minimize" className="grid h-full w-[46px] place-items-center">
            <span className="h-px w-[10px] bg-white" />
          </button>
          <button type="button" aria-label="Restore" className="grid h-full w-[46px] place-items-center">
            <svg viewBox="0 0 10 10" className="size-[10px]" aria-hidden="true">
              <path d="M.5 2.500h7v7h-7zM2.500 2.500v-2h7v7h-2" fill="none" stroke="#fff" />
            </svg>
          </button>
          <button type="button" aria-label="Close" className="grid h-full w-[46px] place-items-center">
            <svg viewBox="0 0 10 10" className="size-[10px]" aria-hidden="true">
              <path d="M0 0l10 10M10 0L0 10" stroke="#fff" strokeWidth="1.200" />
            </svg>
          </button>
        </div>
        <nav className="flex h-5 border-b-2 border-[#f0f0f0] bg-white">
          {menus.map(([before, key, after]) => (
            <button key={before + key + after} type="button" className="px-[7px] leading-5">
              {before}
              <span className="underline">{key}</span>
              {after}
            </button>
          ))}
        </nav>
        <div role="tablist" className="flex h-[22px] bg-[#c0c0c0]">
          <button type="button" role="tab" aria-selected="true" className="relative -mb-px h-[23px] w-[52px] border border-b-0 border-black bg-[#454545] text-white">
            General
          </button>
          {ribbonTabs.map((tab) => (
            <button key={tab} type="button" role="tab" aria-selected="false" className="px-[5px] text-[#808080]">
              {tab}
            </button>
          ))}
        </div>
        <Ribbon />
      </header>
      <div className="flex min-h-0 flex-1">
        <Sidebar />
        <div className="flex w-[6px] shrink-0 flex-col items-center justify-center gap-[2px] border-r border-[#606060] bg-[#c0c0c0]">
          {Array.from({ length: 8 }, (_, i) => (
            <span key={i} className="size-[2px] bg-[#eeeeee]" />
          ))}
        </div>
        <Editor />
      </div>
      <footer className="flex h-[23px] shrink-0 items-center border-t border-[#dadada] leading-[23px]">
        <span className="h-full w-[100px] border-r border-[#d8d8d8] text-center">11/05/2023</span>
        <span className="h-full w-[75px] border-r border-[#d8d8d8] text-center">16:16:26</span>
        <span className="h-full w-[150px] border-r border-[#d8d8d8] text-center">Modified</span>
        <span className="h-full w-[550px] border-r border-[#d8d8d8] pl-1">C:\LuWriting\Harry\Fire In The Heart.scrib</span>
        <span className="h-full flex-1 pl-1">11/05/2023 16:16:10 : File loaded: Fire In The Heart.scrib - Backed up to zip!</span>
      </footer>
    </div>
  );
}
